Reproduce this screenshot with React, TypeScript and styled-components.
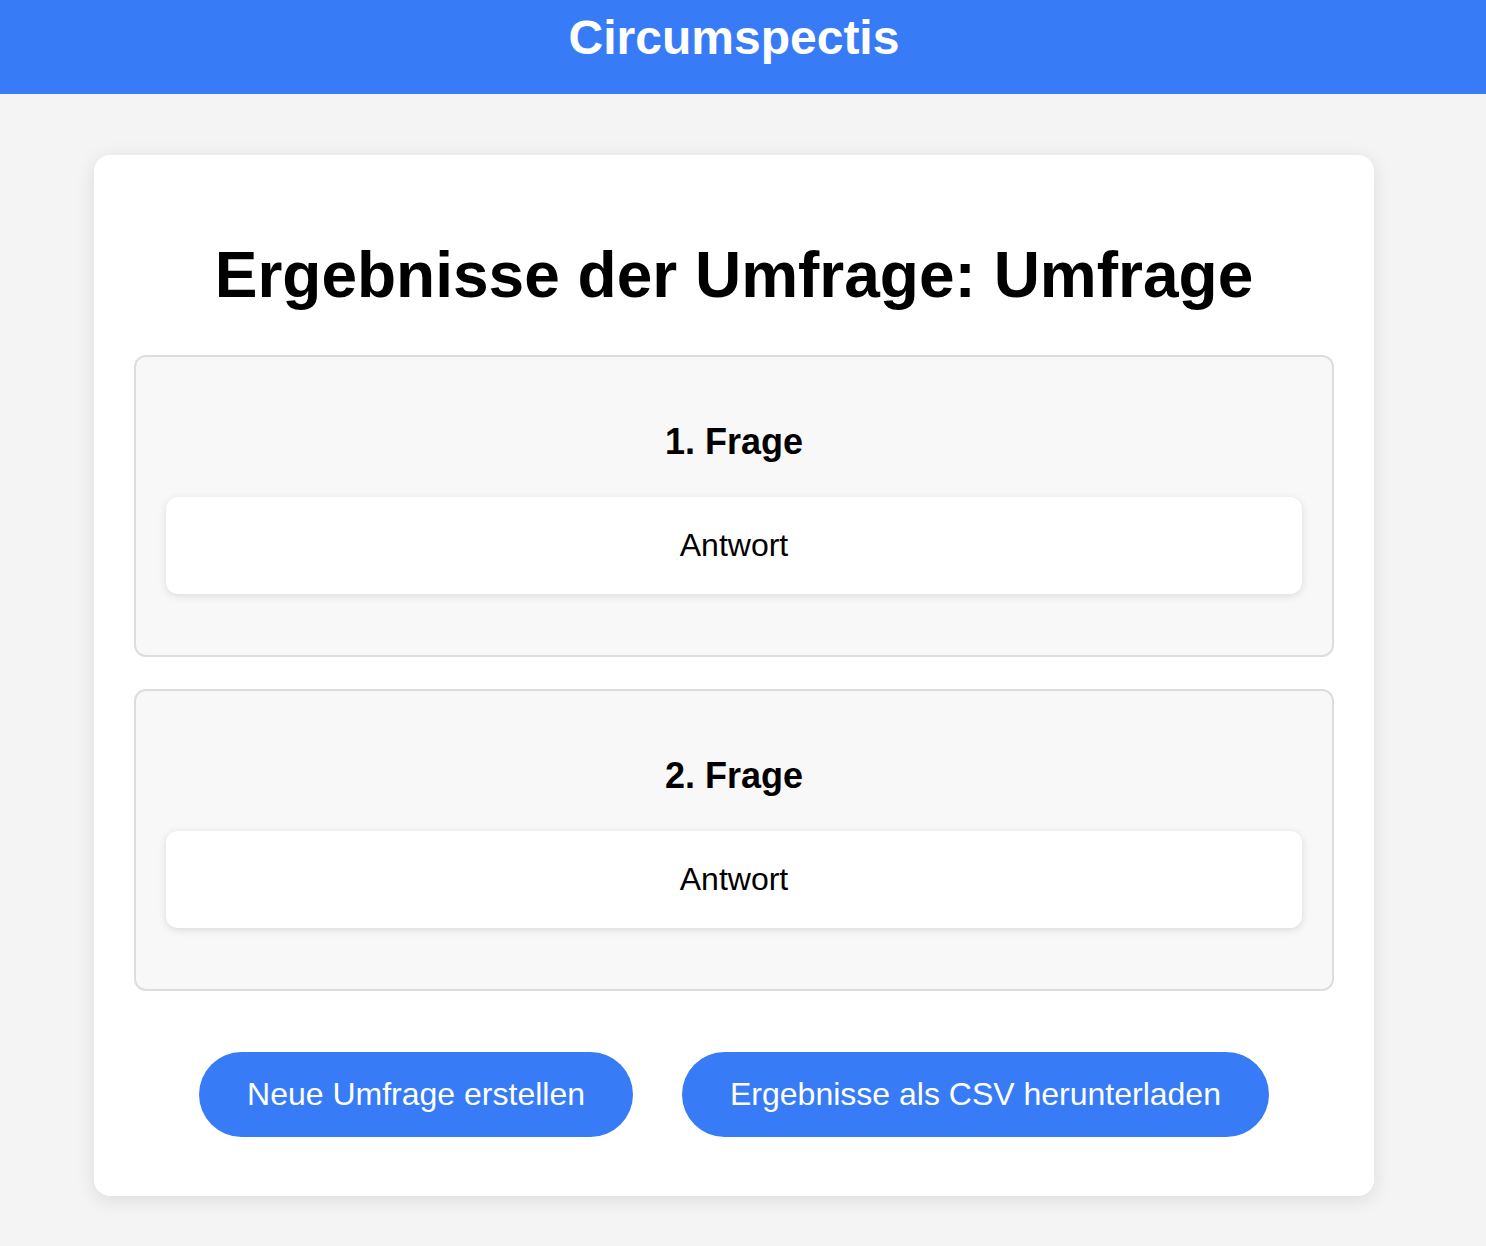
import React from "react";
import styled, { createGlobalStyle } from "styled-components";

const GlobalStyle = createGlobalStyle`
  html, body {
    margin: 0;
    padding: 0;
    background: #f4f4f4;
    font-family: "Liberation Sans", Arial, Helvetica, sans-serif;
    color: #000;
  }
  * { box-sizing: border-box; }
`;

const Header = styled.header`
  background: #387bf7;
  height: 94px;
  padding: 10px 18px 0 0;
  text-align: center;
`;

const Brand = styled.h1`
  margin: 0;
  color: #fff;
  font-size: 48px;
  font-weight: 700;
  line-height: normal;
`;

const Main = styled.main`
  padding: 61px 18px 51px 0;
`;

const Card = styled.section`
  width: 1280px;
  margin: 0 auto;
  background: #fff;
  border-radius: 16px;
  box-shadow: 0 4px 20px rgba(0, 0, 0, 0.1);
  padding: 40px 40px 19px;
`;

const Title = styled.h2`
  margin: 43px 0;
  text-align: center;
  font-size: 64px;
  font-weight: 700;
  line-height: normal;
`;

const QuestionList = styled.div`
  display: flex;
  flex-direction: column;
  gap: 32px;
`;

const QuestionBox = styled.div`
  background: #f8f8f8;
  border: 2px solid #dddddd;
  border-radius: 12px;
  padding: 30px;
`;

const QuestionTitle = styled.h3`
  margin: 34px 0 34px;
  text-align: center;
  font-size: 36px;
  font-weight: 700;
  line-height: normal;
`;

const Answer = styled.div`
  background: #fff;
  border-radius: 12px;
  box-shadow: 0 2px 8px rgba(0, 0, 0, 0.12);
  padding: 30px;
  text-align: center;
  font-size: 32px;
  line-height: normal;
  margin-bottom: 31px;
`;

const Actions = styled.div`
  display: flex;
  justify-content: center;
  gap: 49px;
  margin: 61px 0 40px;
`;

const Button = styled.button`
  background: #387bf7;
  color: #fff;
  border: none;
  border-radius: 999px;
  padding: 24px 48px;
  font-family: "Liberation Sans", Arial, Helvetica, sans-serif;
  font-size: 32px;
  line-height: normal;
  cursor: pointer;
`;

const questions = [
  { title: "1. Frage", answer: "Antwort" },
  { title: "2. Frage", answer: "Antwort" },
];

export default function App() {
  return (
    <>
      <GlobalStyle />
      <Header>
        <Brand>Circumspectis</Brand>
      </Header>
      <Main>
        <Card>
          <Title>Ergebnisse der Umfrage: Umfrage</Title>
          <QuestionList>
            {questions.map((q) => (
              <QuestionBox key={q.title}>
                <QuestionTitle>{q.title}</QuestionTitle>
                <Answer>{q.answer}</Answer>
              </QuestionBox>
            ))}
          </QuestionList>
          <Actions>
            <Button>Neue Umfrage erstellen</Button>
            <Button>Ergebnisse als CSV herunterladen</Button>
          </Actions>
        </Card>
      </Main>
    </>
  );
}
